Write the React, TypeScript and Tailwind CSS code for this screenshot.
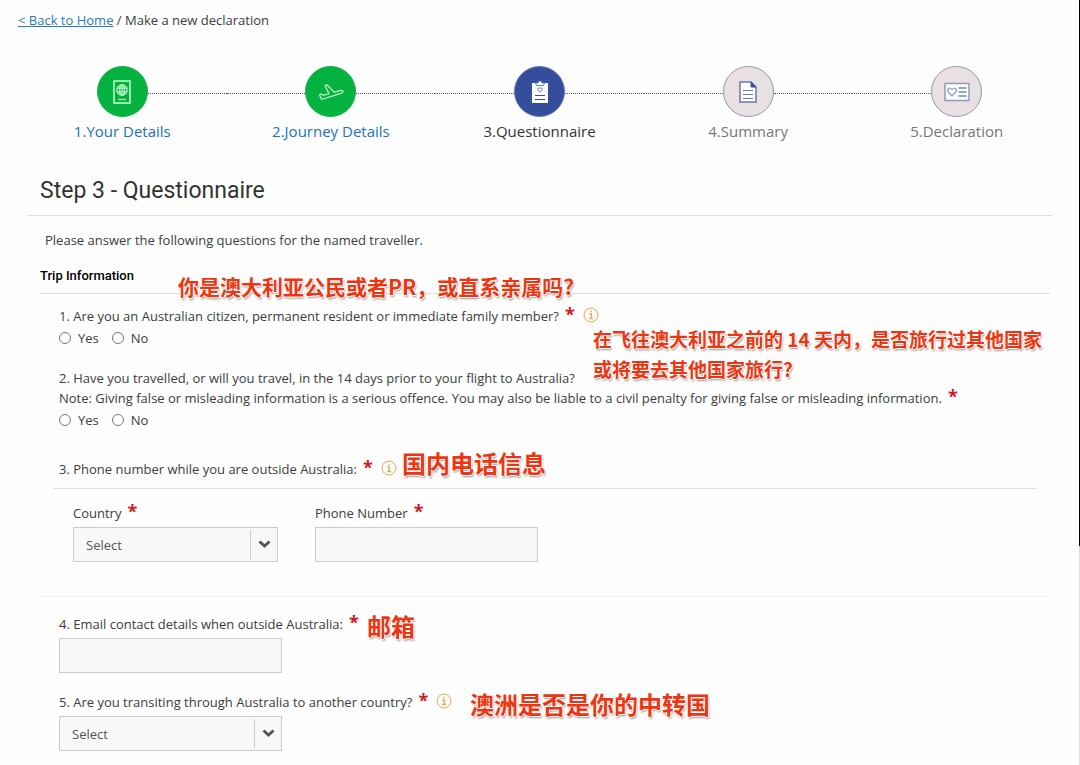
import { useState } from 'react';
import type { ReactNode } from 'react';
import clsx from 'clsx';

type StepStatus = 'done' | 'current' | 'upcoming';

const PassportIcon = () => (
  <svg width="20" height="26" viewBox="0 0 20 26" fill="none" stroke="#bdf5c9" strokeWidth="1.2">
    <rect x="2" y="2" width="16" height="22" strokeWidth="1.6" />
    <circle cx="10" cy="11" r="5.2" />
    <ellipse cx="10" cy="11" rx="2.3" ry="5.2" />
    <path d="M10 5.8v10.4M5 9.2h10M5 12.8h10" />
    <path d="M6 20.5h8" />
  </svg>
);

const PlaneIcon = () => (
  <svg width="26" height="18" viewBox="0 0 26 18" fill="none" stroke="#bdf5c9" strokeWidth="1.3" strokeLinejoin="round">
    <path d="M1.5 11.5L3 11l2.5 1.2 5.5-1.4L7 2.6l2-.8 7.2 7.4 6-1.6c1.5-.4 2.6 0 2.8.8.2.8-.8 1.5-2.2 1.900L5 16c-1.2.3-2 0-2.3-1.2z" />
  </svg>
);

const ClipboardIcon = () => (
  <svg width="18" height="24" viewBox="0 0 18 24" fill="none">
    <path d="M1 3h16v20H1z" fill="#fff" />
    <path d="M4.5 3h2.5A2 2 0 0 1 11 3h2.5l-1 2.5h-7z" fill="#fff" stroke="#5b7fc7" />
    <path d="M9 12.3L6.8 10c-1.2-1.5 1-3 2.2-1.3C10.2 7 12.4 8.5 11.2 10z" stroke="#5b7fc7" />
    <path d="M4 15.5h10M4 19.5h10" stroke="#344e9c" strokeWidth="1.2" />
  </svg>
);

const DocumentIcon = () => (
  <svg width="20" height="24" viewBox="0 0 20 24" fill="none" stroke="#6678b0">
    <path d="M2 2h11l5 5v15H2z" fill="#fff" strokeWidth="1.5" />
    <path d="M13 2l5 5h-5z" fill="#344e9c" stroke="#344e9c" />
    <path d="M5 10.5h10M5 14.5h10M5 18.5h10" strokeWidth="1.2" />
  </svg>
);

const CardIcon = () => (
  <svg width="26" height="20" viewBox="0 0 26 20" fill="none" stroke="#8f9ac4">
    <rect x="1" y="1.5" width="24" height="17" fill="#fff" strokeWidth="1.5" />
    <path d="M8 14l-3.8-4C2.3 7.2 6 4.5 8 7.5c2-3 5.7-.3 3.8 2.5z" strokeWidth="1.2" />
    <path d="M14.5 6h8M14.5 10h8M14.5 14h8" stroke="#6f88c4" strokeWidth="1.3" />
  </svg>
);

const steps: { label: string; status: StepStatus; icon: ReactNode }[] = [
  { label: '1.Your Details', status: 'done', icon: <PassportIcon /> },
  { label: '2.Journey Details', status: 'done', icon: <PlaneIcon /> },
  { label: '3.Questionnaire', status: 'current', icon: <ClipboardIcon /> },
  { label: '4.Summary', status: 'upcoming', icon: <DocumentIcon /> },
  { label: '5.Declaration', status: 'upcoming', icon: <CardIcon /> },
];

function Stepper() {
  return (
    <ol className="mt-9 grid grid-cols-5 px-[18px]">
      {steps.map((step, i) => (
        <li key={step.label} className="flex flex-col items-center">
          <div className="flex w-full items-center">
            <span className={clsx('mt-1 flex-1 border-t border-dotted', i === 0 ? 'border-transparent' : 'border-[#555]')} />
            <span
              className={clsx(
                'flex size-[51px] items-center justify-center rounded-full border',
                step.status === 'done' && 'border-[#0fb546] bg-[#04b23f]',
                step.status === 'current' && 'border-[#5f79bd] bg-[#344e9c]',
                step.status === 'upcoming' && 'border-[#8e93b8] bg-[#e9e0e2]',
              )}
            >
              {step.icon}
            </span>
            <span
              className={clsx('mt-1 flex-1 border-t border-dotted', i === steps.length - 1 ? 'border-transparent' : 'border-[#555]')}
            />
          </div>
          <span
            className={clsx(
              'mt-0.5 text-[15px] leading-6',
              step.status === 'done' && 'text-[#2272b9]',
              step.status === 'current' && 'text-[#333]',
              step.status === 'upcoming' && 'text-[#777]',
            )}
          >
            {step.label}
          </span>
        </li>
      ))}
    </ol>
  );
}

const Required = () => <span className="ml-1.5 inline-block h-5 align-top text-lg leading-4 font-bold text-[#d9141e]">*</span>;

function InfoButton() {
  return (
    <button type="button" aria-label="More information" className="ml-2 inline-block align-top">
      <svg width="16" height="20" viewBox="0 0 16 20" fill="none" stroke="#e6a64a">
        <circle cx="8" cy="9" r="7" />
        <path d="M6.5 8h1.8v4.5M6.2 12.5h4" strokeWidth="1.3" />
        <path d="M7.3 5.5h1.5" strokeWidth="1.6" />
      </svg>
    </button>
  );
}

function Note({ className, children }: { className: string; children: ReactNode }) {
  return (
    <span
      lang="zh"
      className={clsx(
        'absolute z-10 font-["Noto_Sans_CJK_SC",sans-serif] font-bold whitespace-nowrap text-[#ee3512] [text-shadow:1px_0_#fff,-1px_0_#fff,0_1px_#fff,0_-1px_#fff,1px_2px_2px_#999]',
        className,
      )}
    >
      {children}
    </span>
  );
}

function YesNo({ name, labelledBy }: { name: string; labelledBy: string }) {
  return (
    <div role="radiogroup" aria-labelledby={labelledBy} className="mt-0.5 flex gap-[13px]">
      {['Yes', 'No'].map((option) => (
        <label key={option} className="flex items-center gap-[7px]">
          <input
            type="radio"
            name={name}
            value={option}
            className="size-3 appearance-none rounded-full border border-[#777] bg-white checked:border-4 checked:border-[#344e9c]"
          />
          {option}
        </label>
      ))}
    </div>
  );
}

function SelectField({ id, options, className }: { id: string; options: string[]; className: string }) {
  const [value, setValue] = useState('');

  return (
    <div className={clsx('relative mt-1', className)}>
      <select
        id={id}
        value={value}
        onChange={(e) => setValue(e.target.value)}
        className="h-[35px] w-full appearance-none border border-[#ccc] bg-[#f9f8f9] pr-8 pl-3 text-[#555]"
      >
        <option value="">Select</option>
        {options.map((option) => (
          <option key={option}>{option}</option>
        ))}
      </select>
      <span className="pointer-events-none absolute inset-y-[3px] right-0 flex w-7 items-center justify-center border-l border-[#ccc]">
        <svg width="13" height="9" viewBox="0 0 13 9" fill="none" stroke="#555" strokeWidth="3">
          <path d="M1.5 1.5l5 4.5 5-4.5" />
        </svg>
      </span>
    </div>
  );
}

const inputClass = 'mt-1 block h-[35px] w-[223px] border border-[#ccc] bg-[#f9f8f9] px-3';

export default function App() {
  return (
    <div className="flex min-h-screen bg-[#fefefe] font-['Open_Sans','Noto_Sans_CJK_SC',sans-serif] text-[13px] leading-5 text-[#3c3c3c]">
      <div className="min-w-0 flex-1 pb-3.5">
        <nav className="px-[18px] pt-2.5">
          <a href="#home" className="text-[#2a7ab8] underline">
            &lt; Back to Home
          </a>{' '}
          / Make a new declaration
        </nav>

        <Stepper />

        <main className="mx-[27px] mt-8">
          <h1 className="border-b border-[#ddd] pb-2 pl-[13px] font-[Roboto,sans-serif] text-[23px] leading-8 text-[#333]">
            Step 3 - Questionnaire
          </h1>
          <p className="mt-3.5 pl-[18px]">Please answer the following questions for the named traveller.</p>

          <form className="mr-0.5 ml-[13px]" onSubmit={(e) => e.preventDefault()}>
            <div className="relative mt-4 border-b border-[#ddd] pb-[7px]">
              <h2 className="font-[Roboto,sans-serif] text-[13px] font-medium text-black">Trip Information</h2>
              <Note className="top-2 left-[138px] text-[21px] leading-6">你是澳大利亚公民或者PR，或直系亲属吗?</Note>
            </div>

            <div className="mt-3 pl-[19px]">
              <div>
                <span id="q1">1. Are you an Australian citizen, permanent resident or immediate family member?</span>
                <Required />
                <InfoButton />
              </div>
              <YesNo name="citizen" labelledBy="q1" />
            </div>

            <div className="relative mt-5 pl-[19px]">
              <div id="q2">
                2. Have you travelled, or will you travel, in the 14 days prior to your flight to Australia?
                <br />
                Note: Giving false or misleading information is a serious offence. You may also be liable to a civil penalty for
                giving false or misleading information.
                <Required />
              </div>
              <YesNo name="travelled" labelledBy="q2" />
              <Note className="-top-11 left-[553px] text-[19px] leading-[30px]">
                在飞往澳大利亚之前的 14 天内，是否旅行过其他国家
                <br />
                或将要去其他国家旅行?
              </Note>
            </div>

            <fieldset className="mt-[29px]">
              <div className="relative mr-[13px] ml-3.5 border-b border-[#ddd] pb-[9px] pl-[5px]">
                3. Phone number while you are outside Australia:
                <Required />
                <InfoButton />
                <Note className="-top-3 left-[348px] text-2xl leading-8">国内电话信息</Note>
              </div>
              <div className="mt-3.5 flex gap-[37px] pl-[33px]">
                <div>
                  <label htmlFor="country">
                    Country
                    <Required />
                  </label>
                  <SelectField id="country" options={['China', 'New Zealand', 'Singapore']} className="w-[205px]" />
                </div>
                <div>
                  <label htmlFor="phone">
                    Phone Number
                    <Required />
                  </label>
                  <input id="phone" type="tel" className={inputClass} />
                </div>
              </div>
            </fieldset>

            <hr className="mt-[34px] border-[#f0f0f0]" />

            <div className="relative mt-[17px] pl-[19px]">
              <label htmlFor="email">
                4. Email contact details when outside Australia:
                <Required />
              </label>
              <input id="email" type="email" className={inputClass} />
              <Note className="-top-1 left-[327px] text-2xl leading-8">邮箱</Note>
            </div>

            <div className="relative mt-[19px] pl-[19px]">
              <label htmlFor="transit">
                5. Are you transiting through Australia to another country?
                <Required />
              </label>
              <InfoButton />
              <SelectField id="transit" options={['Yes', 'No']} className="w-[223px]" />
              <Note className="-top-1 left-[430px] text-2xl leading-8">澳洲是否是你的中转国</Note>
            </div>
          </form>
        </main>
      </div>

      {/* scroll track */}
      <div aria-hidden="true" className="flex w-px flex-col">
        <div className="flex-[5] bg-black" />
        <div className="flex-[2] bg-[#ddd]" />
      </div>
    </div>
  );
}
